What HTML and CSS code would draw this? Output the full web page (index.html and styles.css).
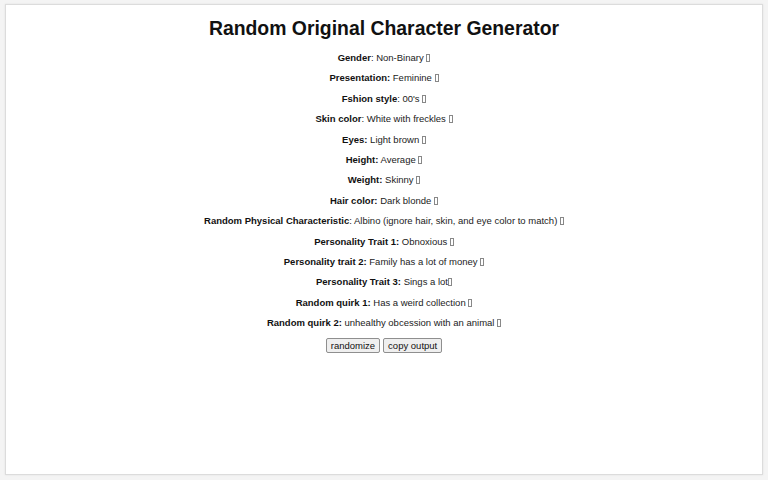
FILE: index.html
```html
<!DOCTYPE html>
<html lang="en">
<head>
<meta charset="utf-8">
<title>Random Original Character Generator</title>
<link rel="stylesheet" href="styles.css">
</head>
<body>
<main class="card">
  <h1 class="title">Random Original Character Generator</h1>
  <div class="traits">
    <p class="trait"><b>Gender</b>: Non-Binary <span class="lock"></span></p>
    <p class="trait"><b>Presentation:</b> Feminine <span class="lock"></span></p>
    <p class="trait"><b>Fshion style</b>: 00's <span class="lock"></span></p>
    <p class="trait"><b>Skin color</b>: White with freckles <span class="lock"></span></p>
    <p class="trait"><b>Eyes:</b> Light brown <span class="lock"></span></p>
    <p class="trait"><b>Height:</b> Average <span class="lock"></span></p>
    <p class="trait"><b>Weight:</b> Skinny <span class="lock"></span></p>
    <p class="trait"><b>Hair color:</b> Dark blonde <span class="lock"></span></p>
    <p class="trait"><b>Random Physical Characteristic</b>: Albino (ignore hair, skin, and eye color to match) <span class="lock"></span></p>
    <p class="trait"><b>Personality Trait 1:</b> Obnoxious <span class="lock"></span></p>
    <p class="trait"><b>Personality trait 2:</b> Family has a lot of money <span class="lock"></span></p>
    <p class="trait"><b>Personality Trait 3:</b> Sings a lot<span class="lock"></span></p>
    <p class="trait"><b>Random quirk 1:</b> Has a weird collection <span class="lock"></span></p>
    <p class="trait"><b>Random quirk 2:</b> unhealthy obcession with an animal <span class="lock"></span></p>
  </div>
  <div class="actions">
    <button class="btn" type="button">randomize</button>
    <button class="btn" type="button">copy output</button>
  </div>
</main>
</body>
</html>
```

FILE: styles.css
```css
html, body {
  margin: 0;
  padding: 0;
}

body {
  background: #f4f4f4;
  font-family: "Liberation Sans", Arial, sans-serif;
  color: #111;
  padding: 4px 5px 5px 5px;
  height: 480px;
  box-sizing: border-box;
}

.card {
  background: #fff;
  border: 1px solid #dcdcdc;
  box-shadow: 0 0 2px rgba(0, 0, 0, 0.08);
  height: 100%;
  box-sizing: border-box;
  text-align: center;
  padding-top: 12px;
}

.title {
  font-size: 19.4px;
  font-weight: bold;
  margin: 0 0 8px 0;
  line-height: 23px;
  color: #111;
}

.traits {
  display: flex;
  flex-direction: column;
}

.trait {
  margin: 0;
  font-size: 9.5px;
  line-height: 20.4px;
  color: #222;
}

.trait b {
  color: #111;
}

.lock {
  display: inline-block;
  width: 2px;
  height: 6px;
  border: 1px solid #888;
  vertical-align: -1px;
}

.actions {
  display: flex;
  justify-content: center;
  gap: 3px;
  margin-top: 4px;
}

.btn {
  font-family: "Liberation Sans", Arial, sans-serif;
  font-size: 9.5px;
  color: #111;
  background: #efefef;
  border: 1px solid #8f8f8f;
  border-radius: 2px;
  padding: 1px 4px;
  line-height: 11px;
}
```
